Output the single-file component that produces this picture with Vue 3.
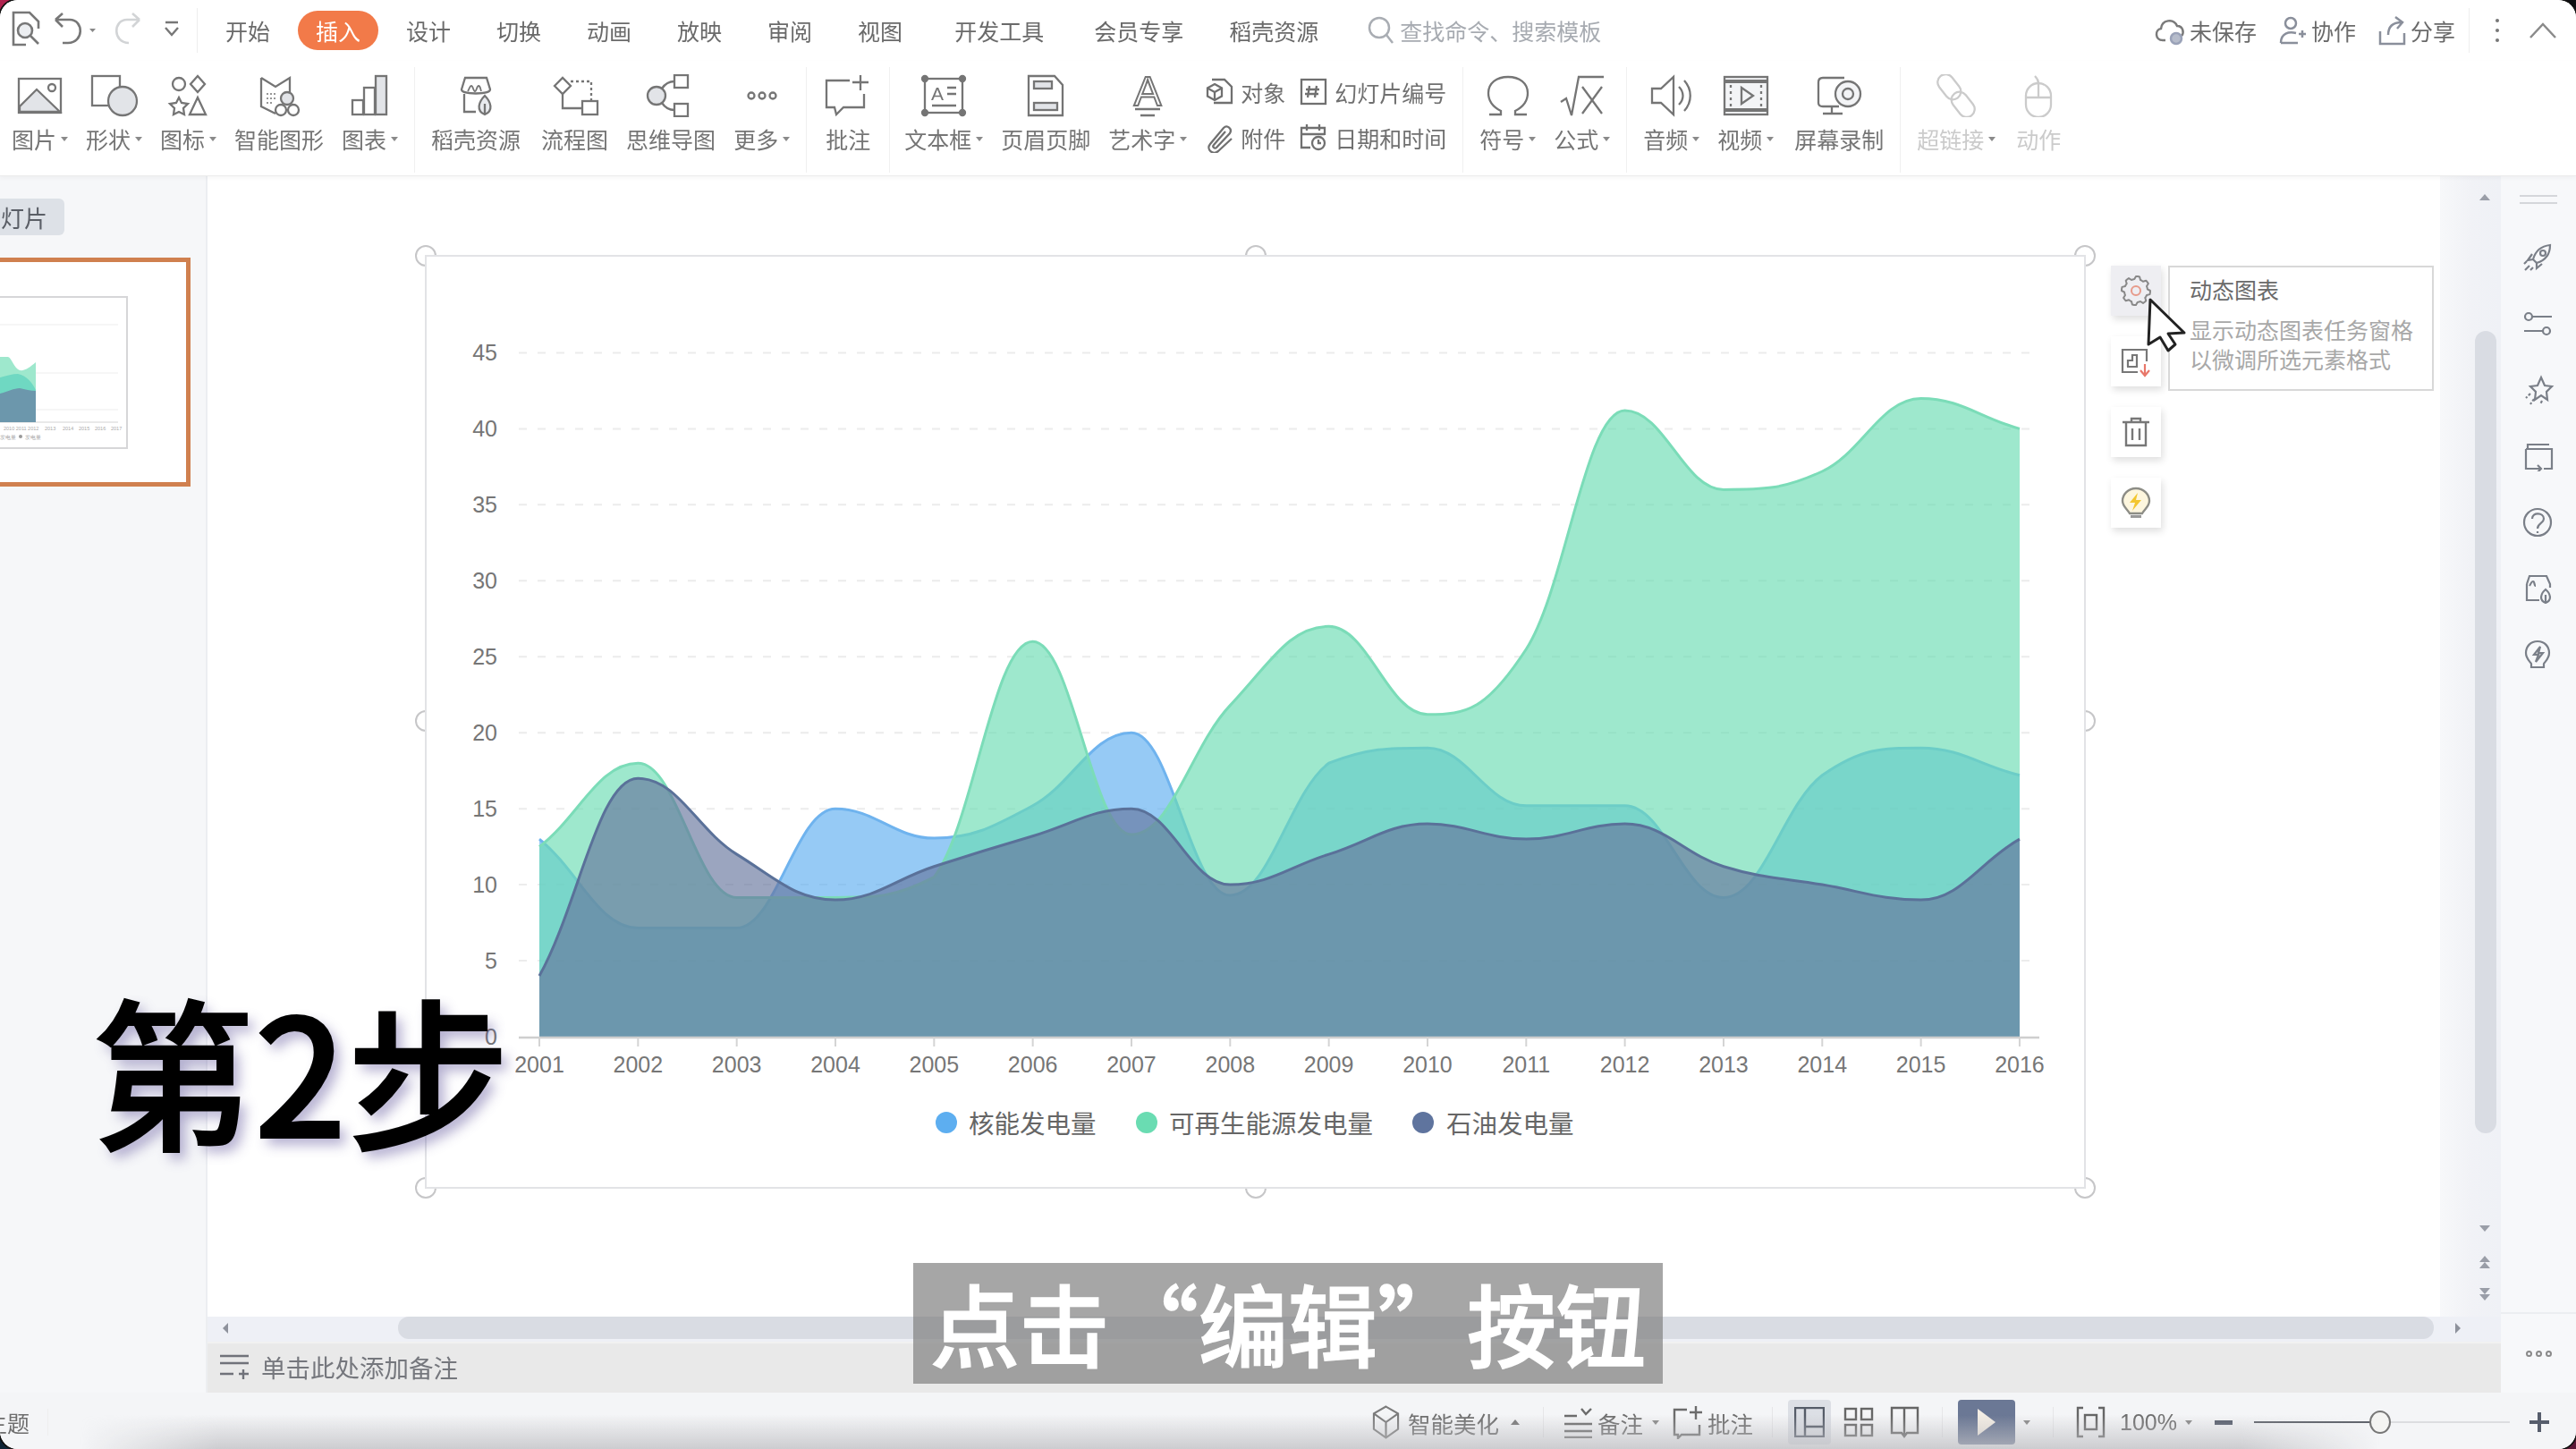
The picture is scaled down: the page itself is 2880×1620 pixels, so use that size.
<script setup>
const icons = {
  pic: '<rect x="4" y="5" width="47" height="38"/><path d="M5 42V36L24 17 50 42Z" fill="#e2e4e8"/><circle cx="41" cy="15" r="4"/>',
  shape: '<rect x="3" y="2" width="31" height="33"/><circle cx="37" cy="30" r="16" fill="#e2e4e8"/>',
  iconset: '<circle cx="17" cy="11" r="7"/><path d="M38 2l8 9-8 9-8-9z"/><path d="M17 26l3 6 7 1-5 5 1 7-6-3-6 3 1-7-5-5 7-1z"/><path d="M38 26l9 19H29z"/>',
  smart: '<path d="M8 4V36L24 44M8 4L24 14 40 4V20"/><path d="M14 22h11M14 27h11M14 32h7" stroke-dasharray="2 2" stroke-width="1.6"/><circle cx="37" cy="27" r="7" fill="#e2e4e8"/><circle cx="30" cy="40" r="6"/><circle cx="44" cy="40" r="6"/>',
  bars: '<rect x="8" y="29" width="12" height="16"/><rect x="21" y="15" width="12" height="30"/><rect x="34" y="2" width="12" height="43" fill="#e2e4e8"/>',
  store: '<path d="M12 17L16 4H40L44 17C44 23 12 23 12 17ZM15 22V42H28"/><path d="M19 19c2-3 2-6 4-6s2 6 4 6 2-6 4-6 2 3 3 6" stroke-width="1.8"/><path d="M38 45C28 41 31 31 38 24 45 31 48 41 38 45ZM38 45V33" fill="#e8eaee"/>',
  flow: '<path d="M5 13l9-9 9 9-9 9z"/><path d="M14 22V38H36"/><path d="M23 8H46V30" stroke-dasharray="3 3"/><rect x="36" y="30" width="17" height="15"/>',
  mind: '<circle cx="12" cy="24" r="10" fill="#e2e4e8"/><path d="M18 16C22 10 26 8 32 8M18 32C22 38 26 40 32 40"/><rect x="32" y="1" width="15" height="14"/><rect x="32" y="33" width="15" height="14"/>',
  more: '<circle cx="16" cy="24" r="3.5"/><circle cx="28" cy="24" r="3.5"/><circle cx="40" cy="24" r="3.5"/>',
  comment: '<path d="M30 7H4V37H13L15 45 23 37H46V22"/><path d="M42 1V18M33 9H51"/>',
  textbox: '<rect x="7" y="5" width="42" height="38"/><g fill="currentColor"><circle cx="7" cy="5" r="3"/><circle cx="49" cy="5" r="3"/><circle cx="7" cy="43" r="3"/><circle cx="49" cy="43" r="3"/></g><text x="14" y="29" font-size="21" font-family="Liberation Sans" fill="currentColor" stroke="none">A</text><path d="M32 15H42M32 22H42M15 35H42"/>',
  header: '<path d="M9 2H38L47 12V46H9Z"/><rect x="15" y="8" width="20" height="8" fill="#e2e4e8"/><rect x="15" y="32" width="26" height="8" fill="#e2e4e8"/>',
  art: '<text x="28" y="35" font-size="46" text-anchor="middle" font-family="Liberation Sans" stroke-width="2">A</text><path d="M14 39H42M20 46H36"/>',
  omega: '<path d="M7 45H20V41C10 36 6 28 6 21 6 10 15 3 28 3 41 3 50 10 50 21 50 28 46 36 36 41V45H49"/>',
  formula: '<path d="M4 31L10 27 16 46 24 3H52M28 14L50 44M50 14L28 44"/>',
  sound: '<path d="M6 16H16L30 3V45L16 32H6ZM36 14C42 20 42 28 36 34M42 7C51 17 51 31 42 41"/>',
  video: '<rect x="4" y="3" width="48" height="42" fill="#f3f4f6"/><path d="M4 8H52M4 40H52" stroke-width="4"/><path d="M11 12V36M45 12V36" stroke-dasharray="3 4"/><path d="M23 15L36 24 23 33Z"/>',
  screen: '<path d="M34 4H10Q5 4 5 9V32Q5 36 10 36H28M20 36V44M10 44H32"/><circle cx="38" cy="22" r="14" fill="#f3f4f6"/><circle cx="38" cy="22" r="6"/>',
  link: '<g transform="rotate(52 28 24)"><rect x="0" y="15" width="31" height="18" rx="9"/><rect x="25" y="15" width="31" height="18" rx="9"/></g>',
  mouse: '<rect x="14" y="10" width="28" height="38" rx="14"/><path d="M14 26H42M28 10V26M28 10C28 6 26 4 24 2"/>',
  object: '<path d="M8 3H22L30 11V29H10"/><path d="M8 7l8 4.5v9l-8 4.5-8-4.5v-9z" transform="translate(3 1)"/><path d="M3 12.500L11 17 19 12.500M11 17V26"/>',
  number: '<rect x="3" y="3" width="27" height="27"/><path d="M12 10L10 23M20 10L18 23M8 14H23M7 19H22"/>',
  clip: '<path d="M30 18L15 32C9 37 1 30 6 24L21 6C25 2 31 7 28 12L13 28C11 30 8 27 10 25L23 10"/>',
  calendar: '<path d="M13 28H3V6H29V14M3 13H29M9 2V9M23 2V9"/><circle cx="22" cy="23" r="7"/><path d="M22 19V23H25"/>',
  rocket: '<path d="M12 19C15 8 22 4 31 3 31 13 26 20 16 23ZM12 19L6 20 11 13M16 23L16 29 22 24M8 26L3 31M5 21L2 24M12 28L9 31"/><circle cx="23" cy="12" r="3"/>',
  sliders: '<circle cx="7" cy="9" r="4"/><path d="M11 9H33M2 25H24"/><circle cx="27" cy="25" r="4"/>',
  starfx: '<path d="M21 3L25 12 33 13 27 19 28 28 21 23 14 28 15 19 9 13 17 12Z"/><path d="M9 21L4 26M13 27L9 33M22 29L20 33" stroke-dasharray="3 2"/>',
  share2: '<path d="M6 9V4H30M4 9H33V31H24M4 9V31H14"/><path d="M10 31H20M17 27L21 31 17 35"/>',
  help: '<circle cx="17" cy="17" r="15"/><path d="M11 13C11 5 24 6 24 13 24 18 17 18 17 24M17 27V29"/>',
  shop: '<path d="M5 12L8 3H27L31 12V16M5 12V30H19"/><path d="M8 14c2-3 2-5 4-5s1 5 3 5"/><path d="M26 33C18 30 21 22 26 18 31 22 34 30 26 33ZM26 33V24" />',
  bulb2: '<path d="M17 2C9 2 4 8 4 15 4 21 8 24 10 27V31H24V27C26 24 30 21 30 15 30 8 25 2 17 2Z"/><path d="M20 8L13 17H18L15 25 23 15H18Z"/>'
}

const ribbon = [
  [
    { label: '图片', caret: true, icon: 'pic' },
    { label: '形状', caret: true, icon: 'shape' },
    { label: '图标', caret: true, icon: 'iconset' },
    { label: '智能图形', icon: 'smart' },
    { label: '图表', caret: true, icon: 'bars' }
  ],
  [
    { label: '稻壳资源', icon: 'store' },
    { label: '流程图', icon: 'flow' },
    { label: '思维导图', icon: 'mind' },
    { label: '更多', caret: true, icon: 'more' }
  ],
  [{ label: '批注', icon: 'comment' }],
  [
    { label: '文本框', caret: true, icon: 'textbox' },
    { label: '页眉页脚', icon: 'header' },
    { label: '艺术字', caret: true, icon: 'art' },
    { label: 'a', rows: [{ label: '对象', icon: 'object' }, { label: '附件', icon: 'clip' }] },
    { label: 'b', rows: [{ label: '幻灯片编号', icon: 'number' }, { label: '日期和时间', icon: 'calendar' }] }
  ],
  [
    { label: '符号', caret: true, icon: 'omega' },
    { label: '公式', caret: true, icon: 'formula' }
  ],
  [
    { label: '音频', caret: true, icon: 'sound' },
    { label: '视频', caret: true, icon: 'video' },
    { label: '屏幕录制', icon: 'screen' }
  ],
  [
    { label: '超链接', caret: true, icon: 'link', off: true },
    { label: '动作', icon: 'mouse', off: true }
  ]
]

const tabs = ['开始', '插入', '设计', '切换', '动画', '放映', '审阅', '视图', '开发工具', '会员专享', '稻壳资源']
const sideIcons = ['rocket', 'sliders', 'starfx', 'share2', 'help', 'shop', 'bulb2']

// chart: the frame's origin is at page (476, 286)
const STEP = 110.33
const X = (i) => 127 + i * STEP
const Y = (v) => 873 - v * 16.99
const BASE = Y(0)
const years = Array.from({ length: 16 }, (_, i) => 2001 + i)
const yTicks = [0, 5, 10, 15, 20, 25, 30, 35, 40, 45]

const nuclear = [13, 7.15, 7.15, 15, 13.06, 15.2, 20, 9.3, 18, 19, 15.2, 15.2, 9.15, 17.2, 19, 17.2]
const renewable = [12.5, 18, 9.15, 9.15, 10.5, 26, 13.3, 21.8, 27, 21.2, 25.5, 41.2, 36, 37.2, 42, 40]
const oil = [4, 17, 12, 9, 11.2, 13.2, 15, 10, 12, 14, 13, 14, 11.2, 10, 9, 13]

function curve(vals) {
  const ys = vals.map(Y)
  const n = ys.length
  const slopes = ys.map((y, i) => {
    if (i === 0) return ((ys[1] - y) / STEP) * 0.9
    if (i === n - 1) return ((y - ys[n - 2]) / STEP) * 0.9
    const a = y - ys[i - 1]
    const b = ys[i + 1] - y
    if (a * b <= 0) return 0
    return (ys[i + 1] - ys[i - 1]) / (2 * STEP)
  })
  const c = STEP * 0.4
  let d = `M${X(0).toFixed(1)} ${ys[0].toFixed(1)}`
  for (let i = 0; i < n - 1; i++) {
    const lo = Math.min(ys[i], ys[i + 1])
    const hi = Math.max(ys[i], ys[i + 1])
    const y1 = Math.min(hi, Math.max(lo, ys[i] + slopes[i] * c))
    const y2 = Math.min(hi, Math.max(lo, ys[i + 1] - slopes[i + 1] * c))
    d += `C${(X(i) + c).toFixed(1)} ${y1.toFixed(1)} ${(X(i + 1) - c).toFixed(1)} ${y2.toFixed(1)} ${X(i + 1).toFixed(1)} ${ys[i + 1].toFixed(1)}`
  }
  return d
}

const series = [nuclear, renewable, oil].map((vals, i) => {
  const line = curve(vals)
  return {
    line,
    area: `${line}L${X(15).toFixed(1)} ${BASE}L${X(0).toFixed(1)} ${BASE}Z`,
    fill: ['#5daef0', '#6adcb2', '#65759c'][i],
    stroke: ['#6fb3ee', '#7bdcb8', '#5a7199'][i]
  }
})

const handles = [
  [0, 0], [928, 0], [1855, 0],
  [0, 520], [1855, 520],
  [0, 1042], [928, 1042], [1855, 1042]
]

const legend = [
  { dot: 582, text: 607, color: '#5daef0', label: '核能发电量' },
  { dot: 806, text: 831, color: '#6adcb2', label: '可再生能源发电量' },
  { dot: 1115, text: 1141, color: '#5f749e', label: '石油发电量' }
]

const gear = (() => {
  const pts = []
  for (let i = 0; i < 48; i++) {
    const a = (i / 48) * Math.PI * 2
    const r = i % 6 < 3 ? 16 : 13
    pts.push(`${(18 + r * Math.cos(a)).toFixed(1)},${(18 + r * Math.sin(a)).toFixed(1)}`)
  }
  return pts.join(' ')
})()
</script>

<template>
  <div class="stage">
    <div class="window">
      <header class="titlebar">
        <svg class="quick" viewBox="0 0 200 44" width="200" height="44" fill="none" stroke="currentColor" stroke-width="2.6">
          <path d="M16 38H2V2H20L30 12V20" />
          <circle cx="15" cy="22" r="8" fill="#eceef1" />
          <path d="M21 28L30 37" />
          <path d="M49 10L57 3M49 10L57 18M49 10H65C81 10 81 36 63 36H57" />
          <path d="M87 20l7 0-3.500 4z" fill="#888" stroke="none" />
          <path d="M143 10L135 3M143 10L135 18M143 10H129C113 10 113 36 131 36" stroke="#d2d4d6" />
          <path d="M172 13H186" stroke-width="2.400" />
          <path d="M172 19L179 27 186 19" stroke-width="2.400" />
        </svg>
        <i class="vrule"></i>
        <nav class="tabs">
          <span v-for="t in tabs" :key="t" class="tab" :class="{ active: t === '插入' }">{{ t }}</span>
        </nav>
        <div class="search">
          <svg viewBox="0 0 30 32" width="30" height="32" fill="none" stroke="#a9adb3" stroke-width="2.500">
            <circle cx="13" cy="13" r="11" />
            <path d="M21 21L28 30" />
          </svg>
          <span>查找命令、搜索模板</span>
        </div>
        <div class="actions">
          <span class="act">
            <svg viewBox="0 0 34 34" width="34" height="34" fill="none" stroke="#7a7a7a" stroke-width="2.500">
              <path d="M12 28H9C0 28 0 16 7 15 8 5 21 3 25 12 32 12 33 20 30 23" />
              <circle cx="24" cy="26" r="6" fill="#b6bccb" stroke="#9aa2b8" />
            </svg>
            未保存
          </span>
          <span class="act">
            <svg viewBox="0 0 32 34" width="32" height="34" fill="none" stroke="#8a8f9b" stroke-width="2.500">
              <circle cx="14" cy="9" r="6" />
              <path d="M3 31C3 20 12 18 20 20M3 31H22M27 17V25M23 21H31" />
            </svg>
            协作
          </span>
          <span class="act">
            <svg viewBox="0 0 32 34" width="32" height="34" fill="none" stroke="#8a8f9b" stroke-width="2.500">
              <path d="M3 18V32H30V20M12 22C12 12 18 8 27 8M20 2L28 8 22 15" />
            </svg>
            分享
          </span>
          <i class="vrule tall"></i>
          <span class="dots"><b></b><b></b><b></b></span>
          <svg class="chev" viewBox="0 0 32 18" width="32" height="18" fill="none" stroke="#8a8a8a" stroke-width="2.500">
            <path d="M2 17L16 2 30 17" />
          </svg>
        </div>
      </header>

      <section class="ribbon">
        <template v-for="(sec, i) in ribbon" :key="i">
          <i v-if="i" class="rule"></i>
          <div class="rgroup" :class="`g${i}`">
            <template v-for="item in sec" :key="item.label">
              <div v-if="item.rows" class="smalls">
                <div v-for="r in item.rows" :key="r.label" class="small">
                  <svg viewBox="0 0 32 34" width="32" height="34" fill="none" stroke="currentColor" stroke-width="2.300" v-html="icons[r.icon]"></svg>
                  <span>{{ r.label }}</span>
                </div>
              </div>
              <div v-else class="ritem" :class="{ off: item.off }">
                <svg viewBox="0 0 56 48" width="56" height="48" fill="none" stroke="currentColor" stroke-width="2.300" v-html="icons[item.icon]"></svg>
                <div class="rlabel">{{ item.label }}<i v-if="item.caret" class="caret"></i></div>
              </div>
            </template>
          </div>
        </template>
      </section>

      <main class="body">
        <aside class="pane">
          <div class="pill">幻灯片</div>
          <div class="thumb">
            <svg viewBox="-35 293 243 246" width="243" height="246">
              <rect x="-100" y="332" width="242" height="169" fill="#fff" stroke="#d6d6d8" stroke-width="2" />
              <path d="M0 363H132M0 417H132M0 458H132" stroke="#f3f3f3" stroke-width="1.500" />
              <path d="M0 472H132" stroke="#e2e2e2" stroke-width="1.500" />
              <path d="M0 399H9C13 400 16 412 22 414 28 415 34 410 40 405V472H0Z" fill="#9ee8cd" />
              <path d="M0 422C8 420 14 418 20 418 30 420 36 428 40 436V472H0Z" fill="#6fd8c2" />
              <path d="M0 440C8 438 16 434 22 434 28 435 34 437 40 437V472H0Z" fill="#6c97ac" />
              <text class="tiny" x="4" y="481">2010 2011 2012</text>
              <text class="tiny" x="50" y="481">2013</text>
              <text class="tiny" x="70" y="481">2014</text>
              <text class="tiny" x="88" y="481">2015</text>
              <text class="tiny" x="106" y="481">2016</text>
              <text class="tiny" x="124" y="481">2017</text>
              <circle cx="23" cy="488" r="2" fill="#999" />
              <text class="tiny" x="0" y="491">发电量</text>
              <text class="tiny" x="28" y="491">发电量</text>
            </svg>
          </div>
        </aside>

        <div class="center">
          <div class="upper">
            <div class="canvas">
              <div class="frame">
                <svg class="chart" viewBox="0 0 1855 1042" width="1855" height="1042">
                  <circle v-for="(h, i) in handles" :key="'h' + i" :cx="h[0]" :cy="h[1]" r="11" fill="#fff" stroke="#c6c6c8" stroke-width="2" />
                  <rect x="0" y="0" width="1855" height="1042" fill="#fff" stroke="#e2e3e6" stroke-width="2" />

                  <path v-for="t in yTicks.slice(1)" :key="t" :d="`M104 ${Y(t)}H1802`" stroke="#ececec" stroke-width="2" stroke-dasharray="9 12" />
                  <text v-for="t in yTicks" :key="'y' + t" class="axis" x="80" :y="Y(t)" text-anchor="end">{{ t }}</text>

                  <g v-for="(s, i) in series" :key="i">
                    <path :d="s.area" :fill="s.fill" fill-opacity="0.65" />
                    <path :d="s.line" fill="none" :stroke="s.stroke" stroke-width="3" />
                  </g>

                  <path d="M104 874H1804" stroke="#cfcfcf" stroke-width="2.500" />
                  <path v-for="(y, i) in years" :key="'t' + y" :d="`M${X(i)} 874V884`" stroke="#d4d4d4" stroke-width="2" />
                  <text v-for="(y, i) in years" :key="'x' + y" class="axis" :x="X(i)" y="904" text-anchor="middle">{{ y }}</text>

                  <g v-for="l in legend" :key="l.label">
                    <circle :cx="l.dot" cy="969" r="12" :fill="l.color" />
                    <text class="legend" :x="l.text" y="968">{{ l.label }}</text>
                  </g>
                </svg>

                <div class="tools">
                  <div class="tool hover">
                    <svg viewBox="0 0 36 36" width="36" height="36">
                      <polygon :points="gear" fill="none" stroke="#888" stroke-width="2" stroke-linejoin="round" />
                      <circle cx="18" cy="18" r="5" fill="none" stroke="#e79a8a" stroke-width="2" />
                    </svg>
                  </div>
                  <div class="tool">
                    <svg viewBox="0 0 36 36" width="36" height="36" fill="none" stroke="#777" stroke-width="2.200">
                      <path d="M20 30H3V5H30V18" />
                      <path d="M9 24V17H14V11H19V24H8" />
                      <path d="M28 21V33M23 28L28 34 33 28" stroke="#e8776a" />
                    </svg>
                  </div>
                  <div class="tool">
                    <svg viewBox="0 0 36 36" width="36" height="36" fill="none" stroke="#777" stroke-width="2.400">
                      <path d="M3 7H33M13 7V3H23V7M7 7V33H29V7M14 14V27M22 14V27" />
                    </svg>
                  </div>
                  <div class="tool">
                    <svg viewBox="0 0 36 36" width="36" height="36">
                      <path d="M18 2C9 2 3 9 3 16 3 22 8 25 11 30H25C28 25 33 22 33 16 33 9 27 2 18 2Z" fill="#fdf6de" stroke="#8d8d86" stroke-width="2.400" />
                      <path d="M20 7L11 18H17L14 27 24 15H18Z" fill="#f3c62f" />
                      <path d="M12 32H24V35H12Z" fill="#999" />
                    </svg>
                  </div>
                  <div class="tip">
                    <div class="tip-title">动态图表</div>
                    <div class="tip-text">显示动态图表任务窗格<br />以微调所选元素格式</div>
                  </div>
                  <svg class="pointer" viewBox="0 0 46 64" width="46" height="64">
                    <polygon points="4,3 2,53 15,45 24,60 32,53 24,41 42,40" fill="#fff" stroke="#222" stroke-width="3" stroke-linejoin="round" />
                  </svg>
                </div>
              </div>
            </div>
            <div class="vscroll">
              <i class="arrow up"></i>
              <i class="vthumb"></i>
              <i class="arrow second"></i>
              <i class="arrow up third"></i>
              <i class="arrow down"></i>
            </div>
          </div>
          <div class="hscroll">
            <i class="arrow left"></i>
            <i class="hthumb"></i>
            <i class="arrow right"></i>
          </div>
          <div class="notes">
            <svg viewBox="0 0 34 30" width="34" height="30" fill="none" stroke="#70727a" stroke-width="2.400">
              <path d="M1 3H33M1 11H33M1 23H16M22 23H33M27 18V29" />
            </svg>
            <span>单击此处添加备注</span>
          </div>
        </div>

        <aside class="side">
          <i class="grip"></i>
          <svg v-for="n in sideIcons" :key="n" viewBox="0 0 36 34" width="36" height="34" fill="none" stroke="#7a7f88" stroke-width="2.200" v-html="icons[n]"></svg>
          <div class="side-more"><b></b><b></b><b></b></div>
        </aside>
      </main>

      <footer class="status">
        <span class="theme">主题</span>
        <i class="vrule low"></i>
        <div class="st-right">
          <svg viewBox="0 0 32 40" width="31" height="40" fill="none" stroke="#7c7c7c" stroke-width="2.200">
            <path d="M16 2L30 10V28L16 38 2 28V10ZM2 10L16 20 30 10M16 20V38" />
          </svg>
          <span class="st-text m9">智能美化</span>
          <i class="caret-up"></i>
          <i class="st-rule m26"></i>
          <svg class="m22" viewBox="0 0 33 36" width="33" height="36" fill="none" stroke="#6c6c6c" stroke-width="2.400">
            <path d="M1 11H15M1 20H32M1 28H32M1 35H32M20 3L25 9 31 3" />
          </svg>
          <span class="st-text m5">备注</span>
          <i class="caret m10"></i>
          <svg class="m15" viewBox="0 0 34 38" width="34" height="38" fill="none" stroke="#6c6c6c" stroke-width="2.400">
            <path d="M16 5H2V33H6L6 37 10 33H30V22M26 1V16M19 8H33" />
          </svg>
          <span class="st-text m5">批注</span>
          <i class="st-rule m21"></i>
          <div class="view-btn active m17">
            <svg viewBox="0 0 34 34" width="34" height="34" fill="none" stroke="#555c68" stroke-width="2.400">
              <rect x="1" y="1" width="32" height="32" /><path d="M12 1V33M12 22H33" />
            </svg>
          </div>
          <svg class="m14" viewBox="0 0 34 34" width="34" height="34" fill="none" stroke="#666" stroke-width="2.400">
            <rect x="2" y="2" width="12" height="12" /><rect x="20" y="2" width="12" height="12" /><rect x="2" y="20" width="12" height="12" /><rect x="20" y="20" width="12" height="12" />
          </svg>
          <svg class="m18" viewBox="0 0 33 36" width="33" height="36" fill="none" stroke="#666" stroke-width="2.400">
            <path d="M2 2H31V30H19L16 34 13 30H2ZM16 2V34" />
          </svg>
          <i class="st-rule m25"></i>
          <div class="play m17"><i></i></div>
          <i class="caret m9"></i>
          <i class="st-rule m25"></i>
          <svg class="m25" viewBox="0 0 33 36" width="33" height="36" fill="none" stroke="#666" stroke-width="2.400">
            <path d="M8 2H2V34H8M25 2H31V34H25" /><rect x="10" y="10" width="13" height="16" />
          </svg>
          <span class="st-zoom m16">100%</span>
          <i class="caret m8"></i>
          <i class="minus m25"></i>
          <div class="slider m24"><i></i></div>
          <svg class="m22" viewBox="0 0 22 22" width="22" height="22" stroke="#565d6c" stroke-width="4">
            <path d="M0 11H22M11 0V22" />
          </svg>
        </div>
      </footer>
    </div>

    <div class="step">第2步</div>
    <div class="caption">点击“编辑”按钮</div>
  </div>
</template>

<style scoped>
.stage {
  position: relative;
  width: 2880px;
  height: 1620px;
  overflow: hidden;
  background: conic-gradient(#0d0d10 0 25%, #5c1636 25% 50%, #0f2436 50% 75%, #b0234f 75%);
  font-family: "Noto Sans CJK SC", "Noto Sans", sans-serif;
  color: #6a6a6a;
}
.window {
  width: 2880px;
  height: 1620px;
  display: flex;
  flex-direction: column;
  background: #fff;
  border-radius: 20px;
  overflow: hidden;
  box-shadow: 0 0 0 2px #111;
  filter: blur(0.7px);
}

/* title row */
.titlebar {
  height: 68px;
  flex: none;
  display: flex;
  align-items: center;
  padding-left: 13px;
  font-size: 25px;
  background: #fff;
}
.quick { color: #777; flex: none; }
.vrule { width: 1px; height: 50px; background: #eee; margin-left: 7px; flex: none; }
.tabs { display: flex; align-items: center; gap: 51px; margin-left: 31px; isolation: isolate; }
.tab { position: relative; line-height: 34px; white-space: nowrap; }
.tab:nth-child(9) { margin-left: 7px; }
.tab:nth-child(10) { margin-left: 5px; }
.tab.active { color: #fff; }
.tab.active::before {
  content: "";
  position: absolute;
  inset: -5px -20px;
  z-index: -1;
  background: #f27a49;
  border-radius: 22px;
}
.search { display: flex; align-items: center; gap: 6px; margin-left: 55px; color: #a7abb1; }
.actions { display: flex; align-items: center; margin-left: auto; padding-right: 21px; }
.act { display: flex; align-items: center; gap: 5px; white-space: nowrap; }
.act + .act { margin-left: 24px; }
.actions .vrule { margin-left: 15px; }
.dots { display: flex; flex-direction: column; gap: 7px; margin-left: 29px; }
.dots b { display: block; width: 4px; height: 4px; border-radius: 50%; background: #777; }
.chev { margin-left: 33px; }

/* ribbon */
.ribbon {
  height: 129px;
  flex: none;
  display: flex;
  padding: 7px 0 0 13px;
  border-bottom: 1px solid #ececec;
  box-shadow: 0 2px 5px rgba(0, 0, 0, 0.04);
  position: relative;
  z-index: 1;
  background: #fff;
  font-size: 25px;
  color: #707070;
  box-sizing: border-box;
}
.rule { width: 1px; height: 118px; background: #f0f0f0; margin: 0 18px; flex: none; }
.rgroup { display: flex; gap: 20px; }
.g1 .ritem:nth-child(2) { margin-left: 3px; }
.g3 { margin-left: -2px; }
.g5 .ritem:nth-child(3) { margin-left: 3px; }
.ritem { display: flex; flex-direction: column; align-items: center; padding-top: 8px; color: #757575; }
.ritem.off { color: #cbcbcb; }
.rlabel { display: flex; align-items: center; height: 34px; margin-top: 7px; white-space: nowrap; line-height: 34px; }
.smalls { display: flex; flex-direction: column; gap: 17px; padding-top: 11px; }
.smalls + .smalls { margin-left: -5px; }
.small { display: flex; align-items: center; gap: 8px; height: 34px; white-space: nowrap; color: #707070; }
.caret {
  display: block;
  width: 0;
  height: 0;
  margin-left: 5px;
  border: 4.500px solid transparent;
  border-top: 5px solid #8a8a8a;
  border-bottom: 0;
  flex: none;
}

/* body */
.body { flex: 1; min-height: 0; display: flex; }
.pane {
  width: 232px;
  flex: none;
  background: #f6f7f9;
  border-right: 2px solid #eceef1;
  box-sizing: border-box;
  overflow: hidden;
}
.pill {
  width: 112px;
  height: 41px;
  margin: 25px 0 0 -40px;
  padding-right: 19px;
  box-sizing: border-box;
  background: #dde1e7;
  border-radius: 6px;
  font-size: 26px;
  line-height: 41px;
  text-align: right;
  color: #5a5e66;
  white-space: nowrap;
}
.thumb {
  width: 253px;
  height: 256px;
  margin: 25px 0 0 -40px;
  border: 5px solid #d0804f;
  box-sizing: border-box;
  background: #fff;
}
.thumb svg { display: block; }
.tiny { font-size: 5.500px; fill: #aaa; font-family: "Liberation Sans", sans-serif; }

.center { flex: 1; min-width: 0; display: flex; flex-direction: column; }
.upper { flex: 1; min-height: 0; display: flex; }
.canvas { flex: 1; min-width: 0; background: #fff; padding: 89px 0 0 244px; box-sizing: border-box; }
.frame { position: relative; width: 1855px; height: 1042px; }
.chart { display: block; overflow: visible; position: relative; z-index: 0; }
.axis {
  font-family: "Liberation Sans", sans-serif;
  font-size: 25px;
  fill: #767676;
  dominant-baseline: central;
}
.legend { font-size: 28.500px; fill: #666; dominant-baseline: central; }

.tools {
  position: absolute;
  left: 1884px;
  top: 11px;
  display: flex;
  flex-direction: column;
  gap: 23px;
}
.tool {
  width: 56px;
  height: 56px;
  display: flex;
  align-items: center;
  justify-content: center;
  background: #fff;
  box-shadow: 2px 4px 8px rgba(0, 0, 0, 0.13);
}
.tool.hover { background: #eeeef2; }
.tip {
  position: absolute;
  left: 64px;
  top: 0;
  width: 297px;
  height: 140px;
  box-sizing: border-box;
  background: #fff;
  border: 2px solid #d8d8d8;
  padding: 8px 0 0 22px;
}
.tip-title { font-size: 25px; line-height: 32px; color: #6a6a6a; }
.tip-text { font-size: 25px; line-height: 33px; color: #a8a8a8; margin-top: 13px; white-space: nowrap; }
.pointer { position: absolute; left: 40px; top: 35px; }

.vscroll {
  position: relative;
  width: 68px;
  flex: none;
  background: linear-gradient(90deg, #f7f8fa, #f1f2f6 50%, #eff1f6);
}
.vthumb {
  position: absolute;
  left: 39px;
  top: 173px;
  width: 24px;
  height: 897px;
  border-radius: 12px;
  background: #d9dce3;
}
.arrow { position: absolute; width: 0; height: 0; border: 6px solid transparent; }
.arrow.up { left: 44px; top: 20px; border-top: 0; border-bottom: 7px solid #9a9ea8; }
.arrow.second { left: 44px; top: 1173px; border-bottom: 0; border-top: 7px solid #9a9ea8; }
.arrow.up.third { top: 1207px; }
.arrow.third::after {
  content: "";
  position: absolute;
  left: -6px;
  top: 7px;
  border: 6px solid transparent;
  border-top: 0;
  border-bottom: 7px solid #9a9ea8;
}
.arrow.down { left: 44px; top: 1243px; border-bottom: 0; border-top: 7px solid #9a9ea8; }
.arrow.down::after {
  content: "";
  position: absolute;
  left: -6px;
  top: 0;
  border: 6px solid transparent;
  border-bottom: 0;
  border-top: 7px solid #9a9ea8;
}

.hscroll { position: relative; height: 28px; flex: none; background: #eef0f6; }
.hthumb {
  position: absolute;
  left: 213px;
  top: 0;
  width: 2276px;
  height: 25px;
  border-radius: 12px;
  background: #d9dce3;
}
.arrow.left { left: 17px; top: 7px; border-left: 0; border-right: 6px solid #8e929c; }
.arrow.right { right: 45px; top: 7px; border-right: 0; border-left: 6px solid #8e929c; }
.notes {
  height: 57px;
  flex: none;
  display: flex;
  align-items: center;
  gap: 13px;
  padding: 0 0 4px 13px;
  background: #e9e9e9;
  font-size: 27.500px;
  color: #75777d;
  border-top: 2px solid #f1f1f1;
  box-sizing: border-box;
}

.side {
  width: 84px;
  flex: none;
  display: flex;
  flex-direction: column;
  align-items: center;
  gap: 40px;
  background: #f7f8fa;
  position: relative;
}
.grip {
  width: 42px;
  height: 6px;
  margin: 21px 0 3px;
  border-top: 2px solid #d4d6da;
  border-bottom: 2px solid #d4d6da;
}
.side-more {
  margin-top: auto;
  width: 100%;
  height: 90px;
  box-sizing: border-box;
  border-top: 2px solid #eceef1;
  display: flex;
  justify-content: center;
  align-items: center;
  gap: 4px;
}
.side-more b { display: block; width: 7px; height: 7px; box-sizing: border-box; border: 2px solid #8a8a8a; border-radius: 50%; }

/* status */
.status {
  position: relative;
  height: 63px;
  flex: none;
  display: flex;
  align-items: center;
  padding-top: 3px;
  box-sizing: border-box;
  background: #f4f5f7;
  font-size: 25px;
  color: #6e6e6e;
  overflow: hidden;
}
.status::after {
  content: "";
  position: absolute;
  left: 90px;
  right: 220px;
  bottom: 0;
  height: 38px;
  background: linear-gradient(rgba(200, 200, 204, 0), rgba(190, 190, 194, 0.75));
  -webkit-mask-image: linear-gradient(90deg, transparent, #000 6%, #000 94%, transparent);
  mask-image: linear-gradient(90deg, transparent, #000 6%, #000 94%, transparent);
  pointer-events: none;
}
.theme { margin-left: -17px; font-size: 25px; white-space: nowrap; }
.status .vrule { height: 30px; margin-left: 20px; }
.st-right { display: flex; align-items: center; margin-left: auto; padding-right: 30px; }
.st-right svg { flex: none; }
.st-text { white-space: nowrap; font-size: 25.500px; }
.st-zoom { width: 65px; font-size: 25px; white-space: nowrap; font-family: "Liberation Sans", sans-serif; }
.st-rule { display: block; width: 1px; height: 34px; background: #e6e6e8; flex: none; }
.caret-up {
  display: block;
  margin-left: 13px;
  width: 0;
  height: 0;
  border: 5px solid transparent;
  border-bottom: 6px solid #777;
  border-top: 0;
}
.view-btn { width: 48px; height: 50px; display: flex; align-items: center; justify-content: center; }
.view-btn.active { background: #dcdfe5; border-radius: 4px; }
.play { width: 64px; height: 50px; background: #6b7895; border-radius: 4px; display: flex; align-items: center; justify-content: center; }
.play i { display: block; width: 0; height: 0; border: 15px solid transparent; border-left: 20px solid #f3ede4; border-right: 0; }
.minus { display: block; width: 20px; height: 5px; background: #565d6c; }
.slider {
  position: relative;
  width: 286px;
  height: 2px;
  background: linear-gradient(90deg, #60646c 49%, #dcdde0 49%);
}
.slider i {
  position: absolute;
  left: 129px;
  top: -12px;
  width: 24px;
  height: 26px;
  box-sizing: border-box;
  border-radius: 50%;
  background: #f4f4f2;
  border: 2px solid #777;
}
.m5 { margin-left: 5px; }
.m8 { margin-left: 8px; }
.m9 { margin-left: 9px; }
.m10 { margin-left: 10px; }
.m14 { margin-left: 14px; }
.m15 { margin-left: 15px; }
.m16 { margin-left: 16px; }
.m17 { margin-left: 17px; }
.m18 { margin-left: 18px; }
.m21 { margin-left: 21px; }
.m22 { margin-left: 22px; }
.m24 { margin-left: 24px; }
.m25 { margin-left: 25px; }
.m26 { margin-left: 26px; }

/* video overlays */
.step {
  position: absolute;
  left: 102px;
  top: 1100px;
  font-size: 182px;
  line-height: 186px;
  font-weight: 500;
  color: #000;
  white-space: nowrap;
  text-shadow: 7px 8px 14px rgba(88, 78, 150, 0.45);
  -webkit-text-stroke: 2px #000;
  filter: blur(0.5px);
}
.caption {
  position: absolute;
  left: 1021px;
  top: 1412px;
  width: 838px;
  height: 135px;
  display: flex;
  align-items: center;
  justify-content: center;
  padding-bottom: 5px;
  box-sizing: border-box;
  background: rgba(128, 128, 128, 0.7);
  color: #fff;
  font-size: 100px;
  font-weight: 500;
  -webkit-text-stroke: 1.500px #fff;
  white-space: nowrap;
}
</style>
